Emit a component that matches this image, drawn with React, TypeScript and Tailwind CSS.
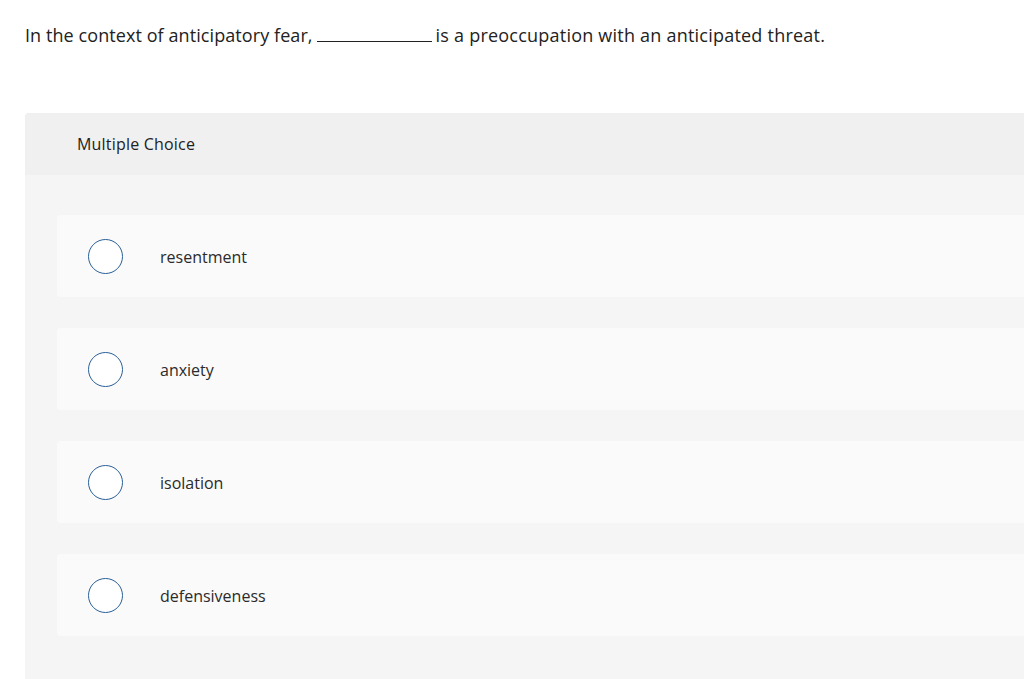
import React from "react";

const options = ["resentment", "anxiety", "isolation", "defensiveness"];

export default function App() {
  return (
    <div
      className="w-[1024px] h-[679px] overflow-hidden bg-white text-[#222]"
      style={{ fontFamily: "'Open Sans', Lato, sans-serif" }}
    >
      <div className="pt-[23px] pl-[25px] text-[18px] leading-[24px] text-[#222] whitespace-nowrap flex items-end">
        <span className="tracking-[0.08px]">In the context of anticipatory fear,</span>
        <span className="inline-block w-[115px] border-b border-[#222] mx-[4px] mb-[5px]"></span>
        <span className="tracking-[0.22px]">is a preoccupation with an anticipated threat.</span>
      </div>
      <div className="mt-[66px] ml-[25px] w-[1100px] rounded-tl-[4px] overflow-hidden bg-[#f5f5f5]">
        <div className="h-[62px] bg-[#f0f0f0] pl-[52px] flex items-center text-[16px] tracking-[0.2px] text-[#222]">
          Multiple Choice
        </div>
        <div className="pt-[40px] pl-[32px] flex flex-col gap-[31px] pb-[60px]">
          {options.map((o) => (
            <div
              key={o}
              className="h-[82px] bg-[#fafafa] rounded-l-[4px] flex items-center pl-[31px]"
            >
              <div className="w-[35px] h-[35px] rounded-full border-[1.5px] border-[#2a5f98] bg-white shrink-0"></div>
              <div className="ml-[37px] text-[16px] text-[#2b2b2b] pt-[1px]">{o}</div>
            </div>
          ))}
        </div>
      </div>
    </div>
  );
}
